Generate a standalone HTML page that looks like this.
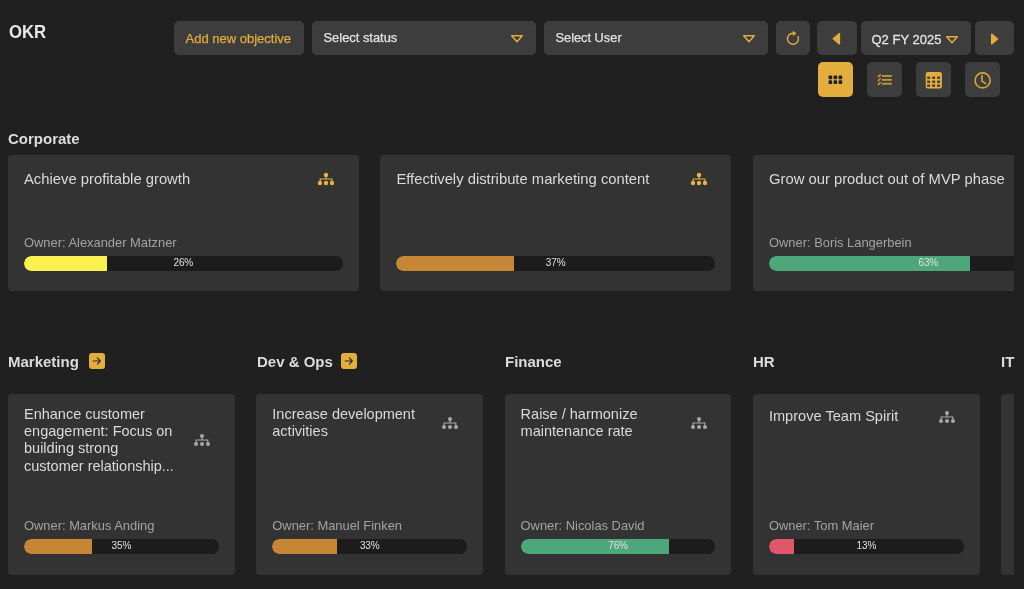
<!DOCTYPE html>
<html><head><meta charset="utf-8">
<style>
*{box-sizing:border-box;margin:0;padding:0}
body{will-change:transform}
html,body{width:1024px;height:589px;overflow:hidden;background:#202020;font-family:"Liberation Sans",sans-serif;color:#e3e3e3}
.a{position:absolute}
.btn{position:absolute;top:21px;height:34px;background:#3d3d3d;border-radius:5px}
.vbtn{position:absolute;top:62px;width:35px;height:35px;background:#3d3d3d;border-radius:5px}
.t{position:absolute;white-space:nowrap;line-height:1}
.sec{position:absolute;font-weight:bold;font-size:15px;color:#dcdcdc;white-space:nowrap;line-height:1}
.card{position:absolute;background:#333333;border-radius:4px}
.ttl{position:absolute;left:16px;white-space:nowrap;font-size:14.8px;line-height:17.5px;color:#dadada}
.own{position:absolute;left:16px;font-size:12.9px;line-height:1;color:#a3a3a3;white-space:nowrap}
.bar{position:absolute;left:16px;right:16px;height:14.7px;background:#1c1c1c;border-radius:7px;overflow:hidden}
.fill{position:absolute;left:0;top:0;bottom:0;border-radius:7px 0 0 7px}
.pct{position:absolute;left:0;right:0;top:0;text-align:center;font-size:10px;letter-spacing:-0.1px;line-height:14.7px;color:#e0e0e0}
svg{position:absolute;display:block}
</style></head><body>

<div class="t" id="okr" style="left:8.5px;top:22px;font-size:19px;font-weight:bold;color:#e8e8e8;transform:scaleX(0.88);transform-origin:0 0">OKR</div>

<div class="btn" style="left:174px;width:130px"></div>
<div class="t" id="addt" style="left:185.5px;top:31.5px;font-size:13px;-webkit-text-stroke:0.25px #e3ad3c;color:#e3ad3c">Add new objective</div>

<div class="btn" style="left:312px;width:224px"></div>
<div class="t" id="sst" style="left:323.5px;top:31.5px;font-size:12.9px;-webkit-text-stroke:0.25px #e3e3e3;color:#e3e3e3">Select status</div>
<svg style="left:510.5px;top:35px" width="12" height="8" viewBox="0 0 12 8"><path d="M0.75 0.75 H11.25 L6 6.65 Z" fill="none" stroke="#e3ad3c" stroke-width="1.5" stroke-linejoin="round"/></svg>

<div class="btn" style="left:544px;width:224px"></div>
<div class="t" id="sut" style="left:555.5px;top:31.5px;font-size:12.8px;-webkit-text-stroke:0.25px #e3e3e3;color:#e3e3e3">Select User</div>
<svg style="left:742.5px;top:35px" width="12" height="8" viewBox="0 0 12 8"><path d="M0.75 0.75 H11.25 L6 6.65 Z" fill="none" stroke="#e3ad3c" stroke-width="1.5" stroke-linejoin="round"/></svg>

<div class="btn" style="left:776px;width:34px"></div>
<svg style="left:784px;top:29px" width="18" height="18" viewBox="0 0 18 18"><path d="M13.76 7.05 A5.5 5.5 0 1 1 9.3 4.3" fill="none" stroke="#dba83b" stroke-width="1.5"/><path d="M9.2 2.3 L12 4.35 L9.2 6.4 Z" fill="#dba83b" stroke="#dba83b" stroke-width="0.9" stroke-linejoin="round"/></svg>

<div class="btn" style="left:817px;width:40px"></div>
<svg style="left:831px;top:32px" width="11" height="14" viewBox="0 0 11 14"><path d="M8.4 1.7 L2.2 6.75 L8.4 11.8 Z" fill="#e3ad3c" stroke="#e3ad3c" stroke-width="1.5" stroke-linejoin="round"/></svg>

<div class="btn" style="left:861px;width:110px"></div>
<div class="t" id="q2t" style="left:871.5px;top:32.5px;font-size:13px;-webkit-text-stroke:0.3px #e3e3e3;color:#e3e3e3">Q2 FY 2025</div>
<svg style="left:946px;top:36px" width="12" height="8" viewBox="0 0 12 8"><path d="M0.75 0.75 H11.25 L6 6.65 Z" fill="none" stroke="#e3ad3c" stroke-width="1.5" stroke-linejoin="round"/></svg>

<div class="btn" style="left:975px;width:39px"></div>
<svg style="left:989px;top:32px" width="11" height="14" viewBox="0 0 11 14"><path d="M2.7 2.2 L8.5 7 L2.7 11.8 Z" fill="#e3ad3c" stroke="#e3ad3c" stroke-width="1.5" stroke-linejoin="round"/></svg>

<!-- view buttons -->
<div class="vbtn" style="left:818px;background:#e4ae3c"></div>
<svg style="left:828px;top:75px" width="15" height="10" viewBox="0 0 15 10"><g fill="#1d2230"><rect x="0.6" y="0.4" width="3.6" height="3.8" rx="0.8"/><rect x="5.6" y="0.4" width="3.6" height="3.8" rx="0.8"/><rect x="10.6" y="0.4" width="3.6" height="3.8" rx="0.8"/><rect x="0.6" y="5.2" width="3.6" height="3.8" rx="0.8"/><rect x="5.6" y="5.2" width="3.6" height="3.8" rx="0.8"/><rect x="10.6" y="5.2" width="3.6" height="3.8" rx="0.8"/></g></svg>

<div class="vbtn" style="left:867px"></div>
<svg style="left:876px;top:73px" width="18" height="14" viewBox="0 0 18 14"><g stroke="#c2973a" stroke-width="1.9" stroke-linecap="butt"><path d="M5.8 3 H15.8"/><path d="M5.8 6.85 H15.8"/><path d="M5.8 10.7 H15.8"/></g><g stroke="#c2973a" stroke-width="1.7" stroke-linecap="round"><path d="M2.4 3.7 L4.2 1.9"/><path d="M2.4 7.55 L4.2 5.75"/><path d="M2.4 11.4 L4.2 9.6"/></g></svg>

<div class="vbtn" style="left:916px"></div>
<svg style="left:925px;top:71px" width="18" height="18" viewBox="0 0 18 18"><rect x="0.7" y="1" width="16.2" height="16.6" rx="2" fill="#e3ad3c"/><g fill="#3d3d3d"><rect x="2.2" y="5.6" width="2.9" height="2.3"/><rect x="7.2" y="5.6" width="2.9" height="2.3"/><rect x="12.1" y="5.6" width="2.9" height="2.3"/><rect x="2.2" y="9.6" width="2.9" height="2.3"/><rect x="7.2" y="9.6" width="2.9" height="2.3"/><rect x="12.1" y="9.6" width="2.9" height="2.3"/><rect x="2.2" y="13.5" width="2.9" height="2.3"/><rect x="7.2" y="13.5" width="2.9" height="2.3"/><rect x="12.1" y="13.5" width="2.9" height="2.3"/></g></svg>

<div class="vbtn" style="left:965px"></div>
<svg style="left:973px;top:71px" width="20" height="20" viewBox="0 0 20 20"><circle cx="9.6" cy="9.4" r="7.5" fill="none" stroke="#d4a53c" stroke-width="1.6"/><path d="M9 4.6 V10.2 L12.6 12.6" fill="none" stroke="#d4a53c" stroke-width="1.6" stroke-linecap="round" stroke-linejoin="round"/></svg>

<!-- Corporate -->
<div class="sec" id="corp" style="left:8px;top:130.5px;font-size:15px">Corporate</div>

<div style="position:absolute;left:0;top:150px;width:1014px;height:150px;overflow:hidden">
  <div class="card" style="left:8px;top:5.3px;width:350.6px;height:135.8px">
    <div class="ttl" id="c1t" style="top:16px;white-space:nowrap">Achieve profitable growth</div>
    <svg style="left:309.4px;top:17px" width="18" height="14" viewBox="0 0 18 14"><g fill="#e8b43a"><circle cx="9" cy="3" r="2.2"/><circle cx="3" cy="11" r="2.2"/><circle cx="9" cy="11" r="2.2"/><circle cx="15" cy="11" r="2.2"/></g><path d="M9 4 V7 M3.2 9 V7 H14.8 V9" fill="none" stroke="#e8b43a" stroke-width="1.1"/></svg>
    <div class="own" id="c1o" style="top:82px">Owner: Alexander Matzner</div>
    <div class="bar" style="top:100.6px"><div class="fill" style="width:26%;background:#fbf24f"></div><div class="pct">26%</div></div>
  </div>
  <div class="card" style="left:380.4px;top:5.3px;width:350.5px;height:135.8px">
    <div class="ttl" style="top:16px;white-space:nowrap">Effectively distribute marketing content</div>
    <svg style="left:309.4px;top:17px" width="18" height="14" viewBox="0 0 18 14"><g fill="#e8b43a"><circle cx="9" cy="3" r="2.2"/><circle cx="3" cy="11" r="2.2"/><circle cx="9" cy="11" r="2.2"/><circle cx="15" cy="11" r="2.2"/></g><path d="M9 4 V7 M3.2 9 V7 H14.8 V9" fill="none" stroke="#e8b43a" stroke-width="1.1"/></svg>
    <div class="bar" style="top:100.6px"><div class="fill" style="width:37%;background:#c68636"></div><div class="pct">37%</div></div>
  </div>
  <div class="card" style="left:753px;top:5.3px;width:350.6px;height:135.8px">
    <div class="ttl" style="top:16px;white-space:nowrap">Grow our product out of MVP phase</div>
    <div class="own" style="top:82px">Owner: Boris Langerbein</div>
    <div class="bar" style="top:100.6px"><div class="fill" style="width:63%;background:#4ea77a"></div><div class="pct">63%</div></div>
  </div>
</div>

<!-- bottom sections -->
<div class="sec" id="mkt" style="left:8px;top:354px">Marketing</div>
<div class="a" style="left:89px;top:353px;width:16px;height:16px;background:#e4ae3c;border-radius:3px"></div>
<svg style="left:89px;top:353px" width="16" height="16" viewBox="0 0 16 16"><path d="M4.2 8 H10.8 M8.3 4.8 L11.3 8 L8.3 11.2" fill="none" stroke="#2a2620" stroke-width="1.1" stroke-linecap="round" stroke-linejoin="round"/></svg>

<div class="sec" style="left:257px;top:354px">Dev &amp; Ops</div>
<div class="a" style="left:341px;top:353px;width:16px;height:16px;background:#e4ae3c;border-radius:3px"></div>
<svg style="left:341px;top:353px" width="16" height="16" viewBox="0 0 16 16"><path d="M4.2 8 H10.8 M8.3 4.8 L11.3 8 L8.3 11.2" fill="none" stroke="#2a2620" stroke-width="1.1" stroke-linecap="round" stroke-linejoin="round"/></svg>

<div class="sec" style="left:505px;top:354px">Finance</div>
<div class="sec" style="left:753px;top:354px">HR</div>
<div class="sec" style="left:1001px;top:354px">IT</div>

<div class="card" style="left:8px;top:393.5px;width:226.9px;height:181.5px">
  <div class="ttl" id="b1t" style="top:12px;width:170px;font-size:14.5px;line-height:17.4px">Enhance customer<br>engagement: Focus on<br>building strong<br>customer relationship...</div>
  <svg style="left:185px;top:39px" width="18" height="14" viewBox="0 0 18 14"><g fill="#a9a9a9"><circle cx="9" cy="3" r="2"/><circle cx="3" cy="11" r="2"/><circle cx="9" cy="11" r="2"/><circle cx="15" cy="11" r="2"/></g><path d="M9 4 V7 M3.2 9 V7 H14.8 V9" fill="none" stroke="#a9a9a9" stroke-width="1.2"/></svg>
  <div class="own" id="b1o" style="top:126px">Owner: Markus Anding</div>
  <div class="bar" style="top:145.4px"><div class="fill" style="width:35%;background:#c68636"></div><div class="pct">35%</div></div>
</div>
<div class="card" style="left:256.3px;top:393.5px;width:226.9px;height:181.5px">
  <div class="ttl" style="top:12px;width:170px;font-size:14.5px;line-height:17.4px">Increase development<br>activities</div>
  <svg style="left:185px;top:22px" width="18" height="14" viewBox="0 0 18 14"><g fill="#a9a9a9"><circle cx="9" cy="3" r="2"/><circle cx="3" cy="11" r="2"/><circle cx="9" cy="11" r="2"/><circle cx="15" cy="11" r="2"/></g><path d="M9 4 V7 M3.2 9 V7 H14.8 V9" fill="none" stroke="#a9a9a9" stroke-width="1.2"/></svg>
  <div class="own" style="top:126px">Owner: Manuel Finken</div>
  <div class="bar" style="top:145.4px"><div class="fill" style="width:33%;background:#c68636"></div><div class="pct">33%</div></div>
</div>
<div class="card" style="left:504.6px;top:393.5px;width:226.9px;height:181.5px">
  <div class="ttl" style="top:12px;width:170px;font-size:14.5px;line-height:17.4px">Raise / harmonize<br>maintenance rate</div>
  <svg style="left:185px;top:22px" width="18" height="14" viewBox="0 0 18 14"><g fill="#a9a9a9"><circle cx="9" cy="3" r="2"/><circle cx="3" cy="11" r="2"/><circle cx="9" cy="11" r="2"/><circle cx="15" cy="11" r="2"/></g><path d="M9 4 V7 M3.2 9 V7 H14.8 V9" fill="none" stroke="#a9a9a9" stroke-width="1.2"/></svg>
  <div class="own" style="top:126px">Owner: Nicolas David</div>
  <div class="bar" style="top:145.4px"><div class="fill" style="width:76%;background:#4ea77a"></div><div class="pct">76%</div></div>
</div>
<div class="card" style="left:752.9px;top:393.5px;width:226.9px;height:181.5px">
  <div class="ttl" style="top:14px;width:170px;font-size:14.6px">Improve Team Spirit</div>
  <svg style="left:185px;top:16px" width="18" height="14" viewBox="0 0 18 14"><g fill="#a9a9a9"><circle cx="9" cy="3" r="2"/><circle cx="3" cy="11" r="2"/><circle cx="9" cy="11" r="2"/><circle cx="15" cy="11" r="2"/></g><path d="M9 4 V7 M3.2 9 V7 H14.8 V9" fill="none" stroke="#a9a9a9" stroke-width="1.2"/></svg>
  <div class="own" style="top:126px">Owner: Tom Maier</div>
  <div class="bar" style="top:145.4px"><div class="fill" style="width:13%;background:#e0566b"></div><div class="pct">13%</div></div>
</div>
<div style="position:absolute;left:1001.2px;top:393.5px;width:12.9px;height:181.5px;overflow:hidden">
  <div class="card" style="left:0;top:0;width:227px;height:181.5px"></div>
</div>

</body></html>
